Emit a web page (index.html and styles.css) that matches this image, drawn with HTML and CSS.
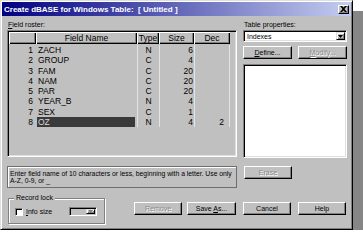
FILE: index.html
```html
<!DOCTYPE html>
<html lang="en">
<head>
  <meta charset="UTF-8" />
  <title>Create dBASE for Windows Table</title>
  <link rel="stylesheet" href="styles.css">
</head>
<body>

  <div class="dialog">
    <div class="titlebar">
      <span class="title">Create dBASE for Windows Table:  [ Untitled ]</span>
      <span class="close">
        <svg width="7" height="6" viewBox="0 0 7 6"><path d="M0 0h2l1.5 1.5L5 0h2L4.5 3 7 6H5L3.5 4.5 2 6H0l2.5-3z" fill="#000"/></svg>
      </span>
    </div>

    <div class="content">
      <div class="top">
        <div class="left">
          <div class="label"><u>F</u>ield roster:</div>
          <div class="roster">
            <div class="grid-head">
              <div class="c-num"></div>
              <div class="c-name">Field Name</div>
              <div class="c-type">Type</div>
              <div class="c-size">Size</div>
              <div class="c-dec">Dec</div>
            </div>
            <!-- field rows -->
            <div class="row first">
              <div class="c-num">1</div><div class="c-name"><span>ZACH</span></div><div class="c-type">N</div><div class="c-size">6</div><div class="c-dec"></div>
            </div>
            <div class="row">
              <div class="c-num">2</div><div class="c-name"><span>GROUP</span></div><div class="c-type">C</div><div class="c-size">4</div><div class="c-dec"></div>
            </div>
            <div class="row">
              <div class="c-num">3</div><div class="c-name"><span>FAM</span></div><div class="c-type">C</div><div class="c-size">20</div><div class="c-dec"></div>
            </div>
            <div class="row">
              <div class="c-num">4</div><div class="c-name"><span>NAM</span></div><div class="c-type">C</div><div class="c-size">20</div><div class="c-dec"></div>
            </div>
            <div class="row">
              <div class="c-num">5</div><div class="c-name"><span>PAR</span></div><div class="c-type">C</div><div class="c-size">20</div><div class="c-dec"></div>
            </div>
            <div class="row">
              <div class="c-num">6</div><div class="c-name"><span>YEAR_B</span></div><div class="c-type">N</div><div class="c-size">4</div><div class="c-dec"></div>
            </div>
            <div class="row">
              <div class="c-num">7</div><div class="c-name"><span>SEX</span></div><div class="c-type">C</div><div class="c-size">1</div><div class="c-dec"></div>
            </div>
            <div class="row sel">
              <div class="c-num">8</div><div class="c-name"><span>OZ</span></div><div class="c-type">N</div><div class="c-size">4</div><div class="c-dec">2</div>
            </div>
          </div>
        </div>

        <div class="right">
          <div class="label">Table properties:</div>
          <div class="combo">
            <span class="combo-text">Indexes</span>
            <span class="arrow"><svg width="5" height="3" viewBox="0 0 5 3"><path d="M0 0h5L2.5 3z" fill="#000"/></svg></span>
          </div>
          <div class="btnrow">
            <button class="btn"><u>D</u>efine...</button>
            <button class="btn" disabled><u>M</u>odify...</button>
          </div>
          <div class="listbox"></div>
        </div>
      </div>

      <div class="middle">
        <div class="message">Enter field name of 10 characters or less, beginning with a letter. Use only<br>A-Z, 0-9, or _</div>
        <button class="btn erase" disabled>Erase</button>
      </div>

      <div class="bottom">
        <div class="group">
          <span class="group-title">Record lock</span>
          <div class="group-body">
            <span class="check"></span>
            <span class="check-label"><u>I</u>nfo size</span>
            <span class="mini-combo">
              <span class="mini-arrow"><svg width="5" height="3" viewBox="0 0 5 3"><path d="M0 0h5L2.5 3z" fill="#808080"/></svg></span>
            </span>
          </div>
        </div>
        <div class="buttons">
          <button class="btn" disabled>Remove</button>
          <button class="btn wide">Save <u>A</u>s...</button>
          <button class="btn gap">Cancel</button>
          <button class="btn gap">Help</button>
        </div>
      </div>
    </div>
  </div>

</body>
</html>
```

FILE: styles.css
```css
body {
  margin: 0;
  background: #fff;
  font-family: "Liberation Sans", Arial, sans-serif;
  font-size: 7px;
  color: #000;
  overflow: hidden;
}
.dialog {
  box-sizing: border-box;
  width: 353px;
  height: 230px;
  background: #c0c0c0;
  border: 1px solid;
  border-color: #dfdfdf #000 #000 #dfdfdf;
  padding: 1px;
  box-shadow: inset 1px 1px #fff, inset -1px -1px #808080, 10px 11px 0 #868686;
}
.titlebar {
  height: 14px;
  display: flex;
  align-items: center;
  justify-content: space-between;
  padding: 0 2px;
  background: linear-gradient(to right, #000080, #c4cdf0);
}
.title {
  color: #fff;
  font-weight: bold;
  font-size: 8px;
  white-space: pre;
}
.close {
  box-sizing: border-box;
  width: 11px;
  height: 9px;
  display: flex;
  align-items: center;
  justify-content: center;
  background: #c0c0c0;
  border: 1px solid;
  border-color: #fff #000 #000 #fff;
  box-shadow: inset -1px -1px #808080;
}
.content {
  padding: 3px 4px 0 5px;
}
.top {
  display: flex;
  gap: 6px;
}
.left {
  width: 230px;
}
.right {
  width: 104px;
}
.label {
  height: 11px;
  line-height: 11px;
  padding-left: 1px;
}

/* grid */
.roster {
  box-sizing: border-box;
  height: 127px;
  padding: 1px;
  border: 1px solid;
  border-color: #808080 #fff #fff #808080;
  box-shadow: inset 1px 1px #000, inset -1px -1px #dfdfdf;
  font-size: 8.5px;
}
.grid-head, .row {
  display: flex;
}
.grid-head div {
  box-sizing: border-box;
  height: 12px;
  line-height: 12px;
  text-align: center;
  box-shadow: inset 1px 1px #fff, inset -1px -1px #000, inset -2px -2px #808080;
}
.c-num { width: 27px; }
.c-name { width: 101px; }
.c-type { width: 22px; }
.c-size { width: 35px; }
.c-dec { width: 36px; }
.row div {
  box-sizing: border-box;
  height: 10.3px;
  line-height: 10.3px;
}
.row.first {
  margin-top: 1px;
}
.row .c-num {
  text-align: right;
  padding-right: 3px;
}
.row .c-name {
  padding-left: 1px;
  padding-right: 2px;
}
.row .c-name span {
  display: block;
  padding-left: 1px;
}
.row .c-type {
  text-align: center;
  border-left: 1px solid #e4e4e4;
}
.row .c-size {
  text-align: right;
  padding-right: 1px;
  border-left: 1px solid #e4e4e4;
}
.row .c-dec {
  text-align: right;
  padding-right: 5px;
  border-left: 1px solid #e4e4e4;
  border-right: 1px solid #e4e4e4;
}
.row.sel .c-name span {
  background: #3a3a3a;
  color: #d8d8d8;
}

/* right panel */
.combo {
  box-sizing: border-box;
  height: 12px;
  display: flex;
  align-items: center;
  justify-content: space-between;
  background: #fff;
  border: 1px solid;
  border-color: #808080 #fff #fff #808080;
  box-shadow: inset 1px 1px #000, inset -1px -1px #dfdfdf;
  padding: 1px;
}
.combo-text {
  padding-left: 2px;
}
.arrow, .mini-arrow {
  box-sizing: border-box;
  width: 9px;
  height: 100%;
  display: flex;
  align-items: center;
  justify-content: center;
  background: #c0c0c0;
  border: 1px solid;
  border-color: #dfdfdf #000 #000 #dfdfdf;
  box-shadow: inset 1px 1px #fff, inset -1px -1px #808080;
}
.btnrow {
  display: flex;
  justify-content: space-between;
  margin-top: 4px;
}
.btnrow .btn {
  width: 49px;
}
.listbox {
  box-sizing: border-box;
  height: 94px;
  margin-top: 5px;
  background: #fff;
  border: 1px solid;
  border-color: #808080 #fff #fff #808080;
  box-shadow: inset 1px 1px #000, inset -1px -1px #dfdfdf;
}

/* buttons */
.btn {
  box-sizing: border-box;
  width: 48px;
  height: 13px;
  padding: 0;
  background: #c0c0c0;
  border: 1px solid;
  border-color: #fff #000 #000 #fff;
  box-shadow: inset -1px -1px #808080;
  font-family: "Liberation Sans", Arial, sans-serif;
  font-size: 7px;
  color: #000;
}
.btn:disabled {
  color: #8a8a8a;
  text-shadow: 1px 1px #fff;
}

/* message + erase */
.middle {
  display: flex;
  align-items: flex-start;
  gap: 7px;
  margin-top: 8px;
}
.message {
  box-sizing: border-box;
  width: 230px;
  height: 22px;
  padding: 3px 2px 0 2px;
  font-size: 6.8px;
  line-height: 7px;
  white-space: nowrap;
  border: 1px solid #6e6e6e;
  box-shadow: inset 1px 1px #fff;
}

/* bottom */
.bottom {
  display: flex;
  align-items: flex-start;
}
.group {
  box-sizing: border-box;
  width: 97px;
  height: 26px;
  margin: 10px 0 0 1px;
  border: 1px solid #808080;
  box-shadow: inset 1px 1px #fff, 1px 1px #fff;
}
.group-title {
  display: inline-block;
  margin: -5px 0 0 5px;
  padding: 0 2px;
  line-height: 8px;
  background: #c0c0c0;
  vertical-align: top;
}
.group-body {
  display: flex;
  align-items: center;
  padding: 1px 0 0 6px;
}
.check {
  box-sizing: border-box;
  width: 8px;
  height: 8px;
  background: #fff;
  border: 1px solid;
  border-color: #808080 #fff #fff #808080;
  box-shadow: inset 1px 1px #000;
}
.check-label {
  margin-left: 3px;
}
.mini-combo {
  box-sizing: border-box;
  width: 28px;
  height: 9px;
  margin-left: 17px;
  display: flex;
  justify-content: flex-end;
  border: 1px solid;
  border-color: #808080 #fff #fff #808080;
  box-shadow: inset 1px 1px #000;
  padding: 1px;
}
.buttons {
  display: flex;
  margin: 14px 0 0 29px;
}
.buttons .wide {
  width: 49px;
  margin-left: 5px;
}
.buttons .gap {
  margin-left: 7px;
}
```
